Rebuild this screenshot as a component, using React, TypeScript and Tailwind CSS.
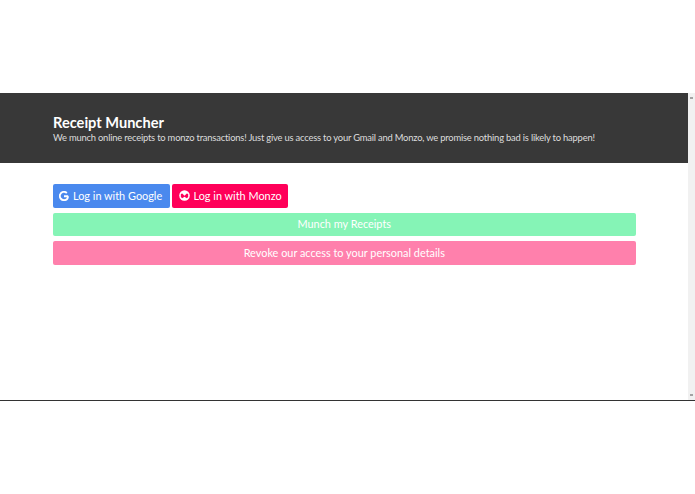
export default function App() {
  const font = "font-['Lato',sans-serif]";
  return (
    <div className={`w-[695px] h-[494px] bg-white overflow-hidden pt-[93px] ${font}`}>
      <div className="flex h-[308px] border-b border-[#333333]">
        <div className="flex-1 min-w-0">
          <div className="h-[70px] bg-[#383838] pl-[53px] pt-[20.5px]">
            <h1 className="text-[14.6px] leading-[17px] font-bold text-white">Receipt Muncher</h1>
            <p className="text-[9.4px] leading-[13px] tracking-[-0.2px] text-[#dddddd] whitespace-nowrap">
              We munch online receipts to monzo transactions! Just give us access to your Gmail and Monzo, we promise nothing bad is likely to happen!
            </p>
          </div>
          <div className="pl-[52.5px] pr-[52px] pt-[21px] flex flex-col gap-[5px]">
            <div className="flex gap-[2px]">
              <button className="h-[23.5px] w-[117.5px] rounded-[2px] bg-[#4a89ee] text-white text-[10.9px] flex items-center gap-[4px] pl-[6.5px]">
                <svg width="10" height="10" viewBox="0 0 24 24" fill="none" stroke="white" strokeWidth="4.5">
                  <path d="M22 12.5H12M21.5 12.5c0 5.500-4 9.500-9.500 9.500a10 10 0 1 1 6.800-17.300" />
                </svg>
                Log in with Google
              </button>
              <button className="h-[23.5px] w-[116px] rounded-[2px] bg-[#ff0059] text-white text-[10.9px] flex items-center gap-[4px] pl-[6.5px]">
                <svg width="11" height="11" viewBox="0 0 24 24">
                  <circle cx="12" cy="12" r="11.500" fill="white" />
                  <path d="M4 8.500l3-1 5 5 5-5 3 1v7l-3 2.500-5-3.500-5 3.500-3-2.500z" fill="#ff0059" />
                </svg>
                Log in with Monzo
              </button>
            </div>
            <button className="h-[23.5px] rounded-[2px] bg-[#85f4b6] text-white text-[10.9px] flex items-center justify-center">
              Munch my Receipts
            </button>
            <button className="h-[23.5px] rounded-[2px] bg-[#ff80ac] text-white text-[10.9px] flex items-center justify-center">
              Revoke our access to your personal details
            </button>
          </div>
        </div>
        <div className="w-[7px] bg-[#f1f1f1] flex flex-col justify-between items-center py-[4px]">
          <div className="w-[3px] h-[2px] bg-[#a3a3a3]" />
          <div className="w-[3px] h-[2px] bg-[#a3a3a3]" />
        </div>
      </div>
    </div>
  );
}
